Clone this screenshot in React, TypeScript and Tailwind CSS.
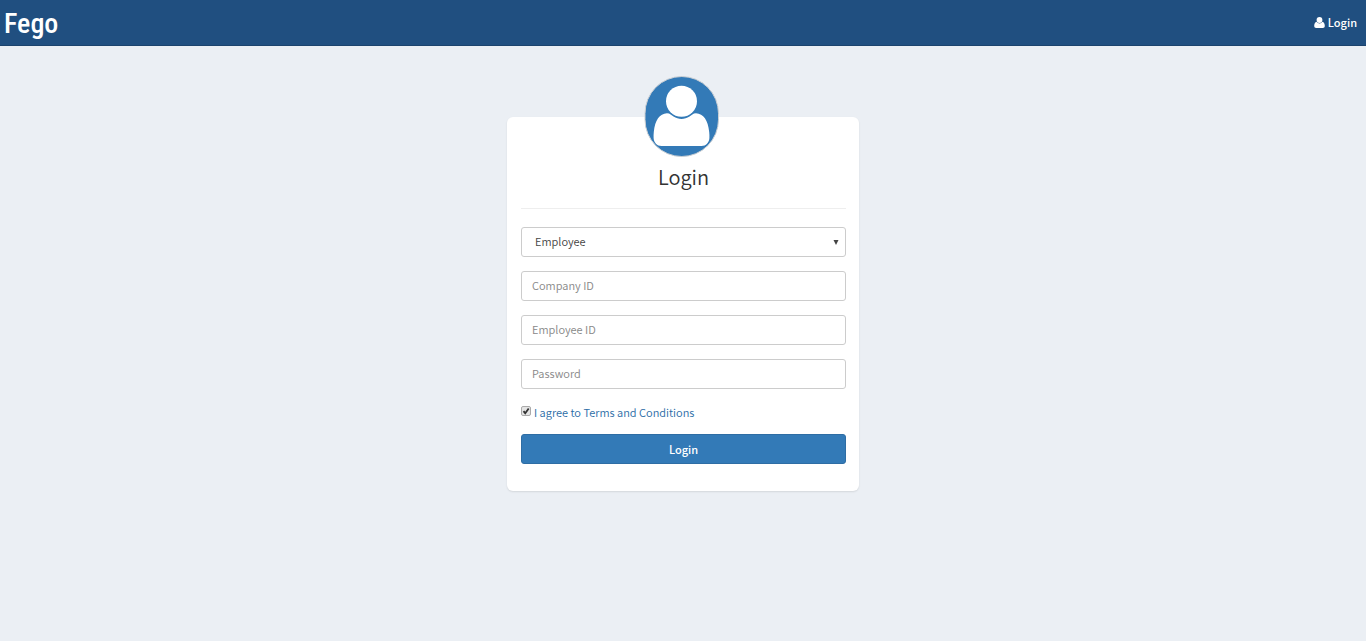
import { useState } from 'react';
import type { FormEvent } from 'react';

const FIELDS = [
  { id: 'company', label: 'Company ID', type: 'text' },
  { id: 'employee', label: 'Employee ID', type: 'text' },
  { id: 'password', label: 'Password', type: 'password' }
];

function UserIcon() {
  return (
    <svg viewBox="0 0 11 11" className="w-[11px] h-[11px]" fill="currentColor" aria-hidden="true">
      <ellipse cx="5.5" cy="3" rx="2.9" ry="3" />
      <path d="M2.6 4.8C1 5 .2 6.9.2 9c0 1.2.8 2 1.9 2h6.8c1.1 0 1.9-.8 1.9-2 0-2.1-.8-4-2.4-4.2C7.6 6 6.6 6.500 5.500 6.500S3.400 6 2.600 4.800z" />
    </svg>
  );
}

function Avatar() {
  return (
    <svg viewBox="0 0 76 82" className="w-[76px] h-[82px]" aria-hidden="true">
      <rect x="1" y="0.5" width="73.5" height="80" rx="37" fill="#337ab7" stroke="#ccd0d4" strokeWidth="1" />
      <circle cx="37.5" cy="25.2" r="15.5" fill="#fff" />
      <path
        d="M23 37.200C15.500 37.500 11 44 9.800 56c-.2 2-.3 4-.2 6 .3 4.500 3.400 8 7.900 8h40c4.500 0 7.600-3.500 7.900-8 .1-2 0-4-.2-6C64 44 59.500 37.500 52 37.200c-3 0-4.500 2-6.500 3.300-5 3.200-11 3.200-16 0-2-1.300-3.500-3.300-6.500-3.300z"
        fill="#fff"
      />
    </svg>
  );
}

export default function App() {
  const [agreed, setAgreed] = useState(true);

  const handleSubmit = (event: FormEvent) => {
    event.preventDefault();
  };

  return (
    <div className="min-h-screen bg-[#ebeff4] text-[11px] font-[350] text-[#333] font-['Noto_Sans_CJK_JP',sans-serif]">
      {/* Navbar */}
      <header className="h-[46px] bg-[#204f80] border-b border-[#1b436d] flex items-center justify-between pl-1 pr-[9px] text-white">
        <a
          href="#"
          className="pt-[3px] text-[28px] leading-[42px] font-medium font-['Roboto_Condensed','Noto_Sans_CJK_JP',sans-serif]"
        >
          Fego
        </a>
        <a href="#" className="flex items-center gap-[3px] font-medium">
          <UserIcon />
          Login
        </a>
      </header>

      {/* Login card */}
      <main className="pt-[71px] flex justify-center">
        <form
          onSubmit={handleSubmit}
          className="w-[352px] max-w-full bg-white rounded-md shadow-[0_1px_2px_rgba(0,0,0,0.1)] pl-[14px] pr-[13px] pb-[27px]"
        >
          <div className="-mt-[41px] pr-1 flex justify-center">
            <Avatar />
          </div>
          <h1 className="h-[50px] pt-[3px] text-[20px] leading-8 font-[350] text-center">Login</h1>
          <hr className="border-[#eee] mb-[18px]" />

          <div className="flex flex-col gap-[14px]">
            <div className="relative">
              <select
                aria-label="Account type"
                className="block w-full h-[30px] px-[13px] pb-[2px] appearance-none bg-white border border-[#ccc] rounded-[3px] text-[#444]"
              >
                <option>Employee</option>
                <option>Company</option>
              </select>
              <svg viewBox="0 0 6 5" className="absolute right-[7px] top-[13px] w-[6px] h-[5px] pointer-events-none" aria-hidden="true">
                <path d="M.5 0h5L3 5z" fill="#444" />
              </svg>
            </div>
            {FIELDS.map((field) => (
              <input
                key={field.id}
                id={field.id}
                type={field.type}
                placeholder={field.label}
                aria-label={field.label}
                className="block w-full h-[30px] px-[10px] pb-[2px] bg-white border border-[#ccc] rounded-[3px] placeholder:text-[#888]"
              />
            ))}
          </div>

          <div className="h-[45px] pt-[2px] flex items-center gap-[3px]">
            <span className="relative block w-[10px] h-[10px] mb-[3px]">
              <input
                id="terms"
                type="checkbox"
                checked={agreed}
                onChange={(event) => setAgreed(event.target.checked)}
                className="block w-[10px] h-[10px] appearance-none bg-[#e4e4e4] border border-[#aaa] rounded-[2px]"
              />
              {agreed && (
                <svg viewBox="0 0 10 10" className="absolute inset-0 w-[10px] h-[10px] pointer-events-none" aria-hidden="true">
                  <path d="M2.5 5.2L4.2 7.2L7.7 2.5" fill="none" stroke="#333" strokeWidth="1.8" />
                </svg>
              )}
            </span>
            <label htmlFor="terms" className="text-[#2b6ca6]">
              I agree to Terms and Conditions
            </label>
          </div>

          <button
            type="submit"
            className="block w-full h-[30px] bg-[#337ab7] border border-[#2e6da4] rounded-[3px] text-white font-medium"
          >
            Login
          </button>
        </form>
      </main>
    </div>
  );
}
